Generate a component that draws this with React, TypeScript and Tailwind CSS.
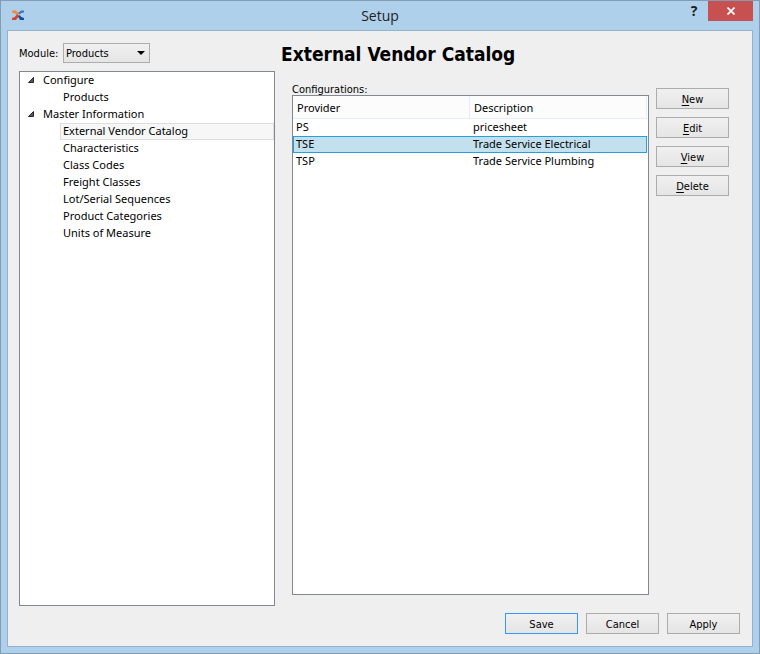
import { useState } from "react";
import type { ReactNode } from "react";

const groups = [
  { name: "Configure", items: ["Products"] },
  {
    name: "Master Information",
    items: [
      "External Vendor Catalog",
      "Characteristics",
      "Class Codes",
      "Freight Classes",
      "Lot/Serial Sequences",
      "Product Categories",
      "Units of Measure",
    ],
  },
];

const providers = [
  { code: "PS", description: "pricesheet" },
  { code: "TSE", description: "Trade Service Electrical" },
  { code: "TSP", description: "Trade Service Plumbing" },
];

const actions = ["New", "Edit", "View", "Delete"];

function PushButton({ children, isDefault = false }: { children: ReactNode; isDefault?: boolean }) {
  return (
    <button
      type="button"
      className={`h-[21px] w-[73px] border bg-linear-to-b from-[#f0f0f0] to-[#e5e5e5] pt-0.5 text-center text-[11px] leading-[17px] ${
        isDefault ? "border-[#3399ff]" : "border-[#acacac]"
      }`}
    >
      {children}
    </button>
  );
}

function AppLogo() {
  return (
    <svg className="h-3 w-3.5" viewBox="0 0 14 12" aria-hidden="true">
      <path d="M1 1.500h4L8 4.500 6 6.500Q4 3.500 1 3.500Z" fill="#f08a3c" />
      <path d="M13 1.500h-3L7 4l1.500 1.500Q10 3.500 13 3.500Z" fill="#3f78c0" />
      <path d="M1 11h4L8 7 6.500 5Q4 8.500 1 9Z" fill="#e0402a" />
      <path d="M13 11h-4L7 7.500 8.500 6Q10 8.500 13 9Z" fill="#1450a0" />
    </svg>
  );
}

function TitleBar() {
  return (
    <header className="grid h-[29px] grid-cols-[1fr_auto_1fr] items-start">
      <div className="pt-2 pl-[10px]">
        <AppLogo />
      </div>
      <h1 className="pt-1 font-['Open_Sans',sans-serif] text-[14px] leading-[22px] text-[#222]">Setup</h1>
      <div className="flex justify-end pr-1.5">
        <button
          type="button"
          aria-label="Help"
          className="h-5 w-7 font-['Open_Sans',sans-serif] text-[14px] leading-5 font-bold text-[#1c1c1c]"
        >
          ?
        </button>
        <button type="button" aria-label="Close" className="flex h-5 w-[45px] items-center justify-center bg-[#c75050]">
          <svg className="h-2 w-2" viewBox="0 0 8 8" aria-hidden="true">
            <path d="M.5.5l7 7M7.500.5l-7 7" stroke="#fff" strokeWidth="1.700" />
          </svg>
        </button>
      </div>
    </header>
  );
}

function ModuleTree({ selected, onSelect }: { selected: string; onSelect: (name: string) => void }) {
  return (
    <nav
      aria-label="Setup pages"
      className="flex-1 border border-[#828790] bg-white font-['Noto_Sans',sans-serif] text-[11px] leading-[13px]"
    >
      <ul>
        {groups.map((group) => (
          <li key={group.name}>
            <button type="button" className="flex h-[17px] w-full items-center pb-0.5 pl-2 text-left">
              <svg className="mr-[9px] h-1.5 w-1.5" viewBox="0 0 6 6" aria-hidden="true">
                <path d="M5.500.5v5h-5z" fill="#595959" stroke="#262626" />
              </svg>
              {group.name}
            </button>
            <ul className="pl-10">
              {group.items.map((item) => (
                <li key={item}>
                  <button
                    type="button"
                    onClick={() => onSelect(item)}
                    className={`block h-[17px] w-full border pb-0.5 pl-0.5 text-left ${
                      item === selected ? "border-[#dedede] bg-[#f7f7f7]" : "border-transparent"
                    }`}
                  >
                    {item}
                  </button>
                </li>
              ))}
            </ul>
          </li>
        ))}
      </ul>
    </nav>
  );
}

function ProviderTable() {
  const [current, setCurrent] = useState("TSE");
  return (
    <div className="flex-1 border border-[#828790] bg-white pr-px">
      <table
        aria-labelledby="configurations"
        className="w-full table-fixed border-separate border-spacing-0 font-['Noto_Sans',sans-serif] text-[11px]"
      >
        <thead>
          <tr className="h-[23px] bg-[#fcfcfc] text-left leading-5">
            <th className="w-1/2 border-r border-b border-[#e3eefa] pt-0.5 pb-0 pl-1 font-normal">Provider</th>
            <th className="w-1/2 border-r border-b border-[#e3eefa] pt-0.5 pb-0 pl-1 font-normal">Description</th>
          </tr>
        </thead>
        <tbody>
          {providers.map(({ code, description }) => {
            const color = code === current ? "border-[#26a0da] bg-[#c3e0ee]" : "border-transparent";
            return (
              <tr key={code} onClick={() => setCurrent(code)} className="h-[17px] leading-[13px]">
                <td className={`border-y border-l pt-0 pb-0.5 pl-0.5 ${color}`}>{code}</td>
                <td className={`border-y border-r pt-0 pb-0.5 pl-[3px] ${color}`}>{description}</td>
              </tr>
            );
          })}
        </tbody>
      </table>
    </div>
  );
}

export default function App() {
  const [page, setPage] = useState("External Vendor Catalog");
  return (
    <div className="flex min-h-screen flex-col border border-[#849cb3] bg-[#afd0eb] font-['DejaVu_Sans_Condensed','DejaVu_Sans',sans-serif] text-black">
      <TitleBar />
      <main className="mx-1.5 mb-1.5 flex flex-1 flex-col border border-[#93b2ce] bg-[#efefef] pt-3 pr-3 pb-3 pl-[11px]">
        <div className="flex flex-1 gap-1.5">
          <section className="flex w-[256px] flex-col">
            <div className="mb-2 flex h-5 items-center text-[11px]">
              <label htmlFor="module" className="w-11 pt-0.5 whitespace-nowrap">
                Module:
              </label>
              <div className="relative h-5 w-[87px]">
                <select
                  id="module"
                  defaultValue="Products"
                  className="h-5 w-full appearance-none border border-[#acacac] bg-linear-to-b from-[#f0f0f0] to-[#e5e5e5] pt-0.5 pl-0.5 text-[11px] leading-4"
                >
                  <option>Products</option>
                </select>
                <svg
                  className="pointer-events-none absolute top-2 right-[5px] h-1 w-2"
                  viewBox="0 0 8 4"
                  aria-hidden="true"
                >
                  <path d="M0 0h8L4 4z" fill="#000" />
                </svg>
              </div>
            </div>
            <ModuleTree selected={page} onSelect={setPage} />
          </section>
          <section className="flex flex-1 flex-col pb-[11px]">
            <h2 className="text-[19px] leading-[22px] font-bold">External Vendor Catalog</h2>
            <div className="flex flex-1 gap-[7px] pt-[18px] pr-[11px] pl-[11px]">
              <div className="flex flex-1 flex-col">
                <span id="configurations" className="h-3 text-[11px] leading-[14px]">
                  Configurations:
                </span>
                <ProviderTable />
              </div>
              <div className="flex flex-col gap-2 pt-[5px]">
                {actions.map((name) => (
                  <PushButton key={name}>
                    <span className="underline underline-offset-2">{name[0]}</span>
                    {name.slice(1)}
                  </PushButton>
                ))}
              </div>
            </div>
          </section>
        </div>
        <footer className="flex justify-end gap-2 pt-[7px]">
          <PushButton isDefault>Save</PushButton>
          <PushButton>Cancel</PushButton>
          <PushButton>Apply</PushButton>
        </footer>
      </main>
    </div>
  );
}
